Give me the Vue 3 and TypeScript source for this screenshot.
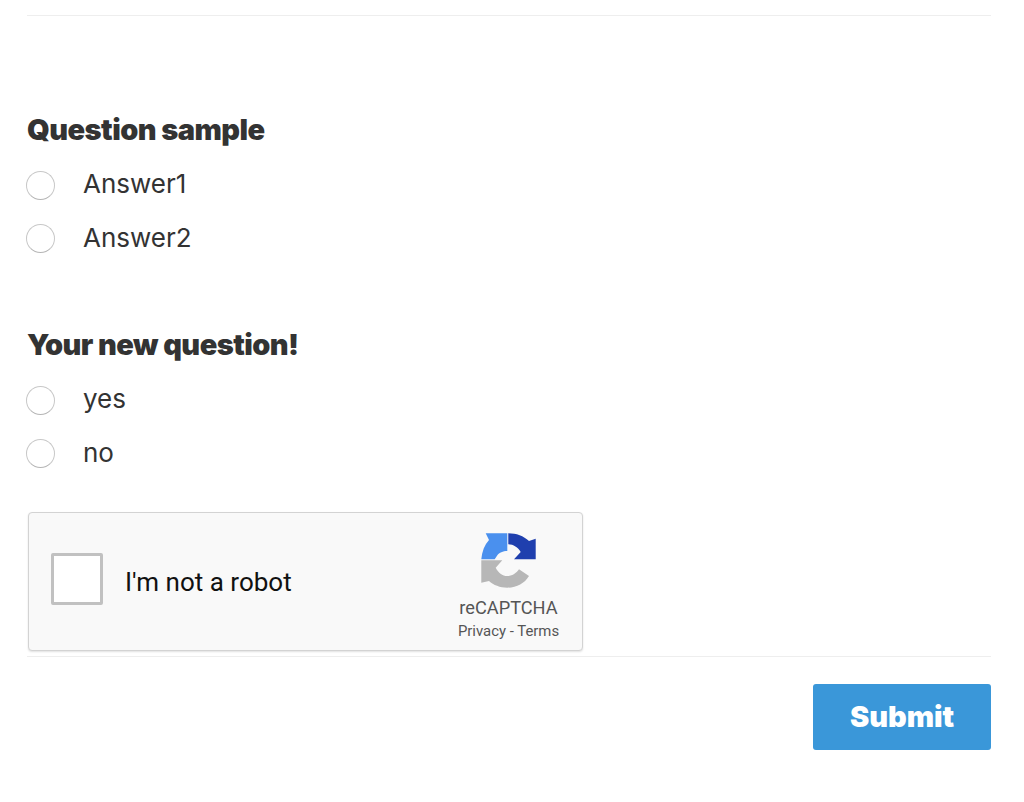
<script setup lang="ts">
interface Question { title: string; answers: string[] }
const questions: Question[] = [
  { title: 'Question sample', answers: ['Answer1', 'Answer2'] },
  { title: 'Your new question!', answers: ['yes', 'no'] },
]
</script>

<template>
  <main class="page">
    <hr class="rule" />
    <section v-for="q in questions" :key="q.title" class="question">
      <h2 class="title">{{ q.title }}</h2>
      <div v-for="a in q.answers" :key="a" class="answer">
        <span class="radio"></span>
        <span class="label">{{ a }}</span>
      </div>
    </section>
    <div class="captcha">
      <span class="box"></span>
      <span class="robot">I'm not a robot</span>
      <div class="brand">
        <svg class="logo" width="56" height="56" viewBox="0 0 56 56">
          <path fill="#b7b7b7" d="M0.300 28.300H21.300L14.700 35.700C17 40.500 21.500 44 26.300 44C31.500 44 35.500 41 38 37.300L48 44C43.500 51.500 35.500 55.700 26.300 55.700C19 55.700 12.500 53 8 49L0.300 50.700Z" />
          <path fill="#4a90ee" d="M0.300 27.300C1 19.500 3.500 13 8 8L4.700 1.300H26.300V19C22 19 18 20.700 16.500 23L13.700 27.300Z" />
          <path fill="#1f3fae" d="M27.300 1.300C35.500 1.300 42.500 4 48 9L54.700 6.700V27.300H33L39.700 20C37 15.500 32.500 12.300 27.300 12.300Z" />
        </svg>
        <div class="name">reCAPTCHA</div>
        <div class="links">Privacy - Terms</div>
      </div>
    </div>
    <hr class="rule bottom" />
    <div class="actions"><button class="submit" type="button">Submit</button></div>
  </main>
</template>

<style scoped>
.page { box-sizing: border-box; width: 1024px; height: 802px; padding: 15px 33px 0 27px; background: #fff; color: #333; font-family: "Inter", "Liberation Sans", sans-serif; overflow: hidden; }
.rule { height: 1px; margin: 0; border: 0; background: #eee; }
.question { margin-top: 97px; }
.question + .question { margin-top: 64px; }
.title { margin: 0 0 10px; height: 34px; font-size: 29px; line-height: 34px; font-weight: 900; letter-spacing: -.55px; color: #333; white-space: nowrap; }
.answer { display: flex; align-items: center; height: 53.5px; }
.radio { box-sizing: border-box; width: 29px; height: 29px; margin-top: 3px; margin-left: -1px; border: 1px solid #c8c8c8; border-bottom-color: #b5b5b5; border-radius: 50%; background: #fff; }
.label { margin-left: 28px; font-size: 26px; color: #333; }
.captcha { box-sizing: border-box; display: flex; align-items: center; width: 555px; height: 139px; margin-top: 33px; margin-left: 1px; padding-left: 22px; background: #f9f9f9; border: 1px solid #d3d3d3; border-radius: 4px; box-shadow: 0 1px 2px rgba(0,0,0,.12); font-family: Roboto, "Liberation Sans", sans-serif; }
.box { box-sizing: border-box; width: 52px; height: 52px; margin-top: -5px; background: #fff; border: 3px solid #c1c1c1; border-radius: 2px; }
.robot { margin-left: 22px; font-size: 26px; color: #111; }
.brand { display: flex; flex-direction: column; align-items: center; margin-left: auto; width: 101px; margin-right: 23px; color: #555; }
.logo { display: block; margin-bottom: 9px; margin-top: 9px; }
.name { font-size: 18.2px; line-height: 22px; }
.links { margin-top: 2px; font-size: 14.9px; line-height: 20px; white-space: nowrap; }
.bottom { margin-top: 5px; }
.actions { display: flex; justify-content: flex-end; margin-top: 27px; }
.submit { width: 178px; height: 66px; padding: 0 0 2px; border: 0; border-radius: 3px; background: #3a97d9; color: #fff; font-family: inherit; font-size: 29px; font-weight: 900; letter-spacing: -.1px; }
</style>
